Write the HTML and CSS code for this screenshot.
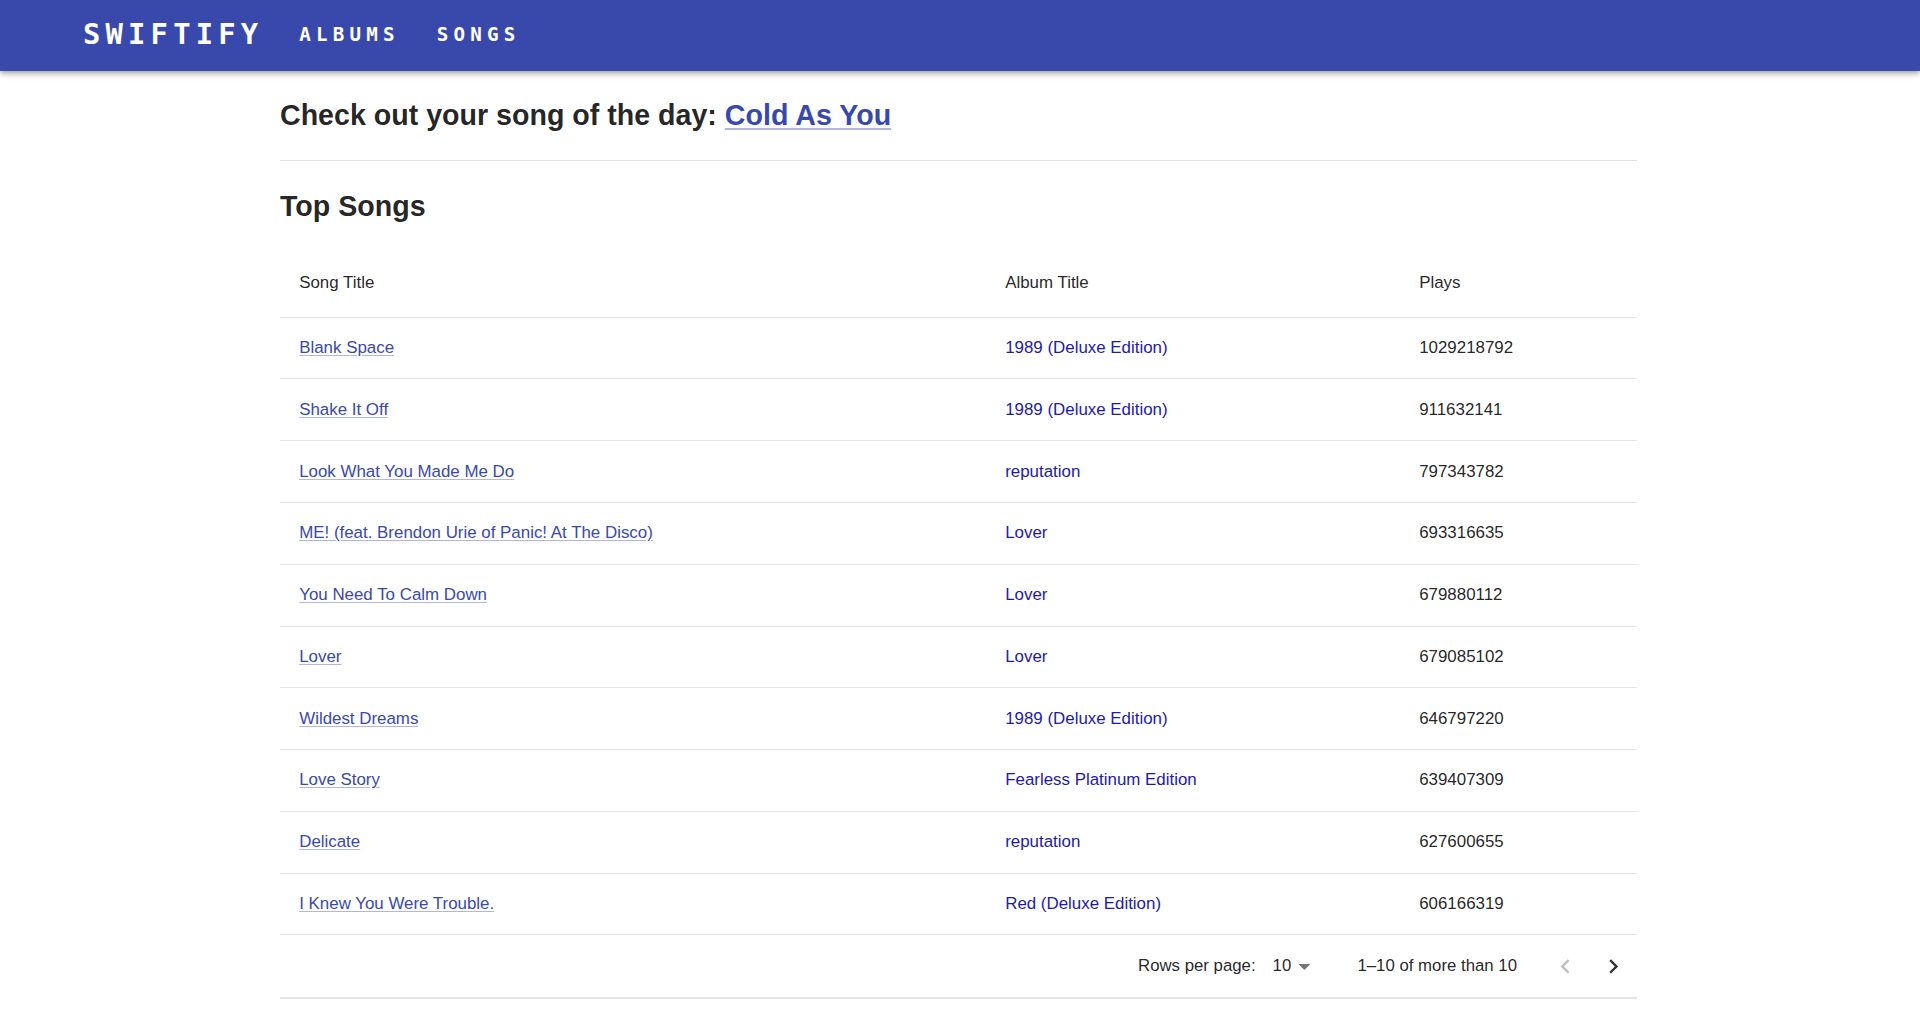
FILE: index.html
```html
<!DOCTYPE html>
<html lang="en">
<head>
<meta charset="utf-8">
<title>Swiftify</title>
<link rel="stylesheet" href="styles.css">
</head>
<body>
<header class="appbar">
  <div class="toolbar">
    <a class="logo" href="#">SWIFTIFY</a>
    <nav class="nav">
      <a class="nav-link" href="#">ALBUMS</a>
      <a class="nav-link" href="#">SONGS</a>
    </nav>
  </div>
</header>
<main class="container">
  <h2 class="sotd">Check out your song of the day: <a class="sotd-link" href="#">Cold As You</a></h2>
  <hr class="divider">
  <h2 class="section-title">Top Songs</h2>
  <table class="songs">
    <colgroup>
      <col class="col-song">
      <col class="col-album">
      <col class="col-plays">
    </colgroup>
    <thead>
      <tr><th>Song Title</th><th>Album Title</th><th>Plays</th></tr>
    </thead>
    <tbody>
      <tr><td><a class="song-link" href="#">Blank Space</a></td><td><a class="album-link" href="#">1989 (Deluxe Edition)</a></td><td>1029218792</td></tr>
      <tr><td><a class="song-link" href="#">Shake It Off</a></td><td><a class="album-link" href="#">1989 (Deluxe Edition)</a></td><td>911632141</td></tr>
      <tr><td><a class="song-link" href="#">Look What You Made Me Do</a></td><td><a class="album-link" href="#">reputation</a></td><td>797343782</td></tr>
      <tr><td><a class="song-link" href="#">ME! (feat. Brendon Urie of Panic! At The Disco)</a></td><td><a class="album-link" href="#">Lover</a></td><td>693316635</td></tr>
      <tr><td><a class="song-link" href="#">You Need To Calm Down</a></td><td><a class="album-link" href="#">Lover</a></td><td>679880112</td></tr>
      <tr><td><a class="song-link" href="#">Lover</a></td><td><a class="album-link" href="#">Lover</a></td><td>679085102</td></tr>
      <tr><td><a class="song-link" href="#">Wildest Dreams</a></td><td><a class="album-link" href="#">1989 (Deluxe Edition)</a></td><td>646797220</td></tr>
      <tr><td><a class="song-link" href="#">Love Story</a></td><td><a class="album-link" href="#">Fearless Platinum Edition</a></td><td>639407309</td></tr>
      <tr><td><a class="song-link" href="#">Delicate</a></td><td><a class="album-link" href="#">reputation</a></td><td>627600655</td></tr>
      <tr><td><a class="song-link" href="#">I Knew You Were Trouble.</a></td><td><a class="album-link" href="#">Red (Deluxe Edition)</a></td><td>606166319</td></tr>
    </tbody>
    <tfoot>
      <tr>
        <td class="pager-cell" colspan="3">
          <div class="pager">
            <span class="pager-label">Rows per page:</span>
            <span class="pager-select">
              <span class="pager-value">10</span>
              <svg class="pager-drop" viewBox="0 0 24 24" aria-hidden="true"><path d="M7 10l5 5 5-5z"/></svg>
            </span>
            <span class="pager-rows">1–10 of more than 10</span>
            <span class="pager-actions">
              <button class="icon-btn is-disabled" type="button" aria-label="Previous page">
                <svg viewBox="0 0 24 24" aria-hidden="true"><path d="M15.41 16.59 10.83 12l4.58-4.59L14 6l-6 6 6 6 1.41-1.41z"/></svg>
              </button>
              <button class="icon-btn" type="button" aria-label="Next page">
                <svg viewBox="0 0 24 24" aria-hidden="true"><path d="M8.59 16.59 13.17 12 8.59 7.41 10 6l6 6-6 6-1.41-1.41z"/></svg>
              </button>
            </span>
          </div>
        </td>
      </tr>
    </tfoot>
  </table>
</main>
</body>
</html>
```

FILE: styles.css
```css
html, body {
  margin: 0;
  padding: 0;
  background: #ffffff;
}

body {
  font-family: "Liberation Sans", Arial, Helvetica, sans-serif;
  color: rgba(0, 0, 0, 0.87);
}

/* ---------- App bar ---------- */
.appbar {
  background: #3949ab;
  height: 71px;
  box-shadow: 0 2px 4px -1px rgba(0, 0, 0, 0.2), 0 4px 5px 0 rgba(0, 0, 0, 0.14), 0 1px 10px 0 rgba(0, 0, 0, 0.12);
  position: relative;
  z-index: 2;
}

.toolbar {
  box-sizing: border-box;
  height: 100%;
  display: flex;
  align-items: center;
  padding-left: 83px;
  padding-bottom: 2px;
}

.logo {
  font-family: "DejaVu Sans Mono", "Liberation Mono", monospace;
  font-weight: 700;
  font-size: 28.8px;
  letter-spacing: 5.2px;
  color: #ffffff;
  text-decoration: none;
  line-height: 1;
  margin-right: 36px;
}

.nav {
  display: flex;
  align-items: center;
  gap: 37px;
}

.nav-link {
  font-family: "DejaVu Sans Mono", "Liberation Mono", monospace;
  font-weight: 700;
  font-size: 19.2px;
  letter-spacing: 5.2px;
  color: #ffffff;
  text-decoration: none;
  line-height: 1;
  padding-top: 1px;
}

/* ---------- Content ---------- */
.container {
  width: 1357px;
  margin: 0 0 0 280px;
}

.sotd,
.section-title {
  font-size: 28.6px;
  font-weight: 700;
  line-height: 38.4px;
  margin: 0;
  color: rgba(0, 0, 0, 0.87);
}

.sotd {
  margin-top: 25px;
}

.sotd-link {
  color: #3949ab;
  text-decoration: underline;
  text-decoration-color: rgba(57, 73, 171, 0.4);
  text-underline-offset: 3px;
  text-decoration-thickness: 2px;
}

.divider {
  border: 0;
  height: 1px;
  background: #e3e3e5;
  margin: 26px 0 25.5px;
}

/* ---------- Table ---------- */
.songs {
  width: 1357px;
  border-collapse: collapse;
  margin-top: 24.3px;
  font-size: 16.9px;
}

.col-song { width: 706px; }
.col-album { width: 414px; }
.col-plays { width: 237px; }

.songs th,
.songs td {
  text-align: left;
  padding: 18.4px 19.2px;
  line-height: 24px;
  border-bottom: 1px solid #e6e6e8;
  color: rgba(0, 0, 0, 0.87);
  font-weight: 400;
}

.songs th {
  line-height: 28.8px;
  padding-top: 19.1px;
  padding-bottom: 19.1px;
}

.song-link {
  color: #3949ab;
  text-decoration: underline;
  text-decoration-color: rgba(57, 73, 171, 0.4);
  text-underline-offset: 2px;
}

.album-link {
  color: #1d1aab;
  text-decoration: none;
}

/* ---------- Pagination ---------- */
.songs td.pager-cell {
  padding: 0;
  border-bottom: 2px solid #e4e4e6;
}

.pager {
  height: 61.4px;
  display: flex;
  align-items: center;
  justify-content: flex-end;
  font-size: 16.8px;
  color: rgba(0, 0, 0, 0.87);
}

.pager-label {
  line-height: 24px;
}

.pager-select {
  display: inline-flex;
  align-items: center;
  margin-left: 17px;
  margin-right: 38.4px;
}

.pager-value {
  line-height: 24px;
}

.pager-drop {
  width: 28.8px;
  height: 28.8px;
  margin-left: -1px;
  fill: rgba(0, 0, 0, 0.54);
}

.pager-rows {
  line-height: 24px;
}

.pager-actions {
  display: inline-flex;
  margin-left: 24px;
}

.icon-btn {
  width: 48px;
  height: 48px;
  padding: 9.6px;
  border: 0;
  background: transparent;
  display: inline-flex;
  align-items: center;
  justify-content: center;
  fill: rgba(0, 0, 0, 0.8);
}

.icon-btn.is-disabled {
  fill: rgba(0, 0, 0, 0.26);
}

.icon-btn svg {
  width: 28.8px;
  height: 28.8px;
  display: block;
}
```
